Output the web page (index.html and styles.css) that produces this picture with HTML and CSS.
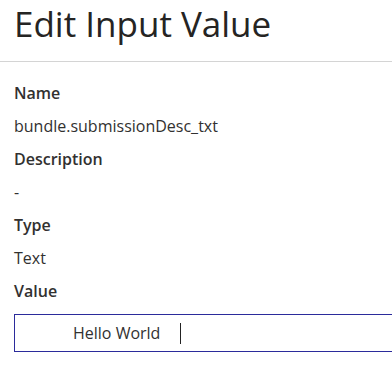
FILE: index.html
```html
<!DOCTYPE html>
<html>
<head>
    <title>Edit Input Value</title>
    <link rel="stylesheet" href="styles.css">
</head>
<body>
    <div class="panel-header">
        <h1>Edit Input Value</h1>
    </div>

    <div class="panel-body">
        <div class="field">
            <div class="field-label">Name</div>
            <div class="field-value">bundle.submissionDesc_txt</div>
        </div>
        <div class="field">
            <div class="field-label">Description</div>
            <div class="field-value">-</div>
        </div>
        <div class="field">
            <div class="field-label">Type</div>
            <div class="field-value">Text</div>
        </div>
        <div class="field">
            <div class="field-label">Value</div>
            <div class="value-input">
                <span class="value-text">Hello World</span>
                <span class="caret"></span>
            </div>
        </div>
    </div>
</body>
</html>
```

FILE: styles.css
```css
/* Panel */
html, body {
    margin: 0;
    padding: 0;
    overflow: hidden;
}
body {
    font-family: 'Open Sans', 'Liberation Sans', sans-serif;
    color: #323130;
    background-color: #fff;
}
.panel-header {
    padding: 0 14px;
    height: 61px;
    border-bottom: 1px solid #d4d4d4;
}
.panel-header h1 {
    margin: 0;
    font-size: 35px;
    font-weight: 400;
    line-height: 48px;
    color: #252423;
}
.panel-body {
    padding: 15px 14px 0 14px;
}
.field-label,
.field-value {
    font-size: 16px;
    line-height: 33px;
}
.field-label {
    font-weight: 600;
}
/* input runs on past the right edge of the panel */
.value-input {
    display: flex;
    align-items: center;
    height: 36px;
    margin-top: 6px;
    margin-right: -14px;
    border: 1px solid #2b2b9b;
    border-right: none;
}
.value-text {
    padding-left: 58px;
    font-size: 16px;
}
.caret {
    width: 1px;
    height: 21px;
    margin-left: 20px;
    background-color: #222;
}
```
